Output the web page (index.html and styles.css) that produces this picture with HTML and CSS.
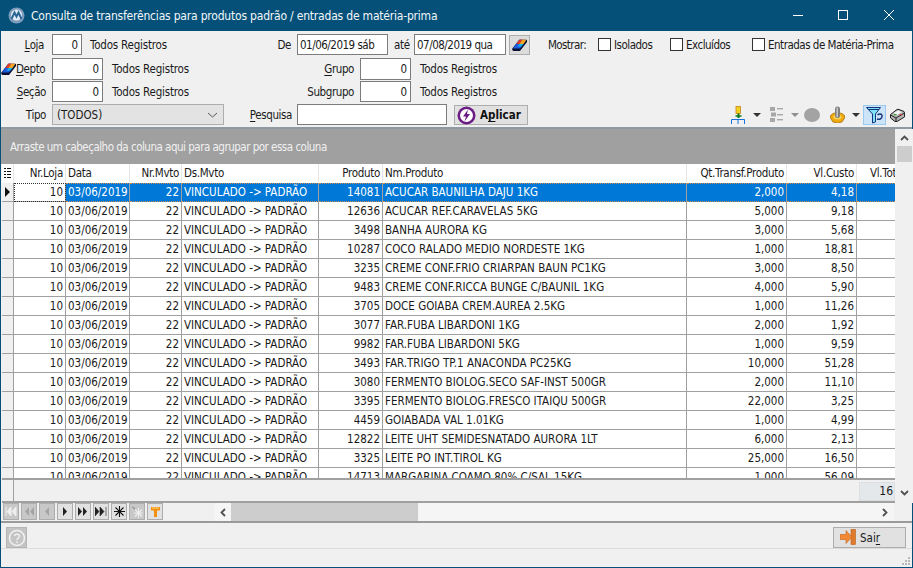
FILE: index.html
```html
<!DOCTYPE html>
<html lang="pt">
<head>
<meta charset="utf-8">
<title>Consulta de transferências</title>
<link rel="stylesheet" href="styles.css">
</head>
<body>
<div class="window">
  <header class="titlebar">
    <svg class="app-icon" width="17" height="17" viewBox="0 0 17 17"><circle cx="8.500" cy="8.500" r="8" fill="#7d9cbc"/><circle cx="8.500" cy="8" r="5.500" fill="#e4edf5"/><path d="M3.500 12 L6.500 5.500 L8.500 9.500 L10.500 5.500 L13.500 12" fill="none" stroke="#2a6695" stroke-width="2"/></svg>
    <span class="title">Consulta de transferências para produtos padrão / entradas de matéria-prima</span>
    <div class="wincontrols">
      <svg width="46" height="31" viewBox="0 0 46 31"><path d="M19 15.500H29" stroke="#fff"/></svg>
      <svg width="46" height="31" viewBox="0 0 46 31"><rect x="18.500" y="10.500" width="9" height="9" fill="none" stroke="#fff"/></svg>
      <svg width="46" height="31" viewBox="0 0 46 31"><path d="M18 10L28 20M28 10L18 20" stroke="#fff"/></svg>
    </div>
  </header>

  <section class="filters">
    <div class="frow r1">
      <label class="lb w-loja"><u>L</u>oja</label>
      <input class="num w30" value="0">
      <span class="all a1">Todos Registros</span>
      <label class="lb w-de">De</label>
      <input class="date" value="01/06/2019 sáb">
      <label class="ate">até</label>
      <input class="date d2" value="07/08/2019 qua">
      <button class="erase"><svg width="15" height="12" viewBox="0 0 15 12"><path d="M0 10L7 1H15V3L8 12H1Z" fill="#0a1030"/><path d="M1 9.500L7.500 .5H14.500L8 9.500Z" fill="#1a5be0"/><path d="M4.500 5L7.500 .5H10.500L7.500 5Z" fill="#e8391c"/><path d="M7.500 5L10.500 .5H14.500L11.500 5Z" fill="#f7a51c"/><path d="M7.500 5H11.500L9.500 7.500H5.500Z" fill="#16b5e8"/></svg></button>
      <span class="mostrar">Mostrar:</span>
      <span class="chk c1"><i></i>Isolados</span>
      <span class="chk c2"><i></i>Excluídos</span>
      <span class="chk c3"><i></i>Entradas de Matéria-Prima</span>
    </div>
    <div class="frow r2">
      <svg class="eraser-small" width="15" height="12" viewBox="0 0 15 12"><path d="M0 10L7 1H15V3L8 12H1Z" fill="#0a1030"/><path d="M1 9.500L7.500 .5H14.500L8 9.500Z" fill="#1a5be0"/><path d="M4.500 5L7.500 .5H10.500L7.500 5Z" fill="#e8391c"/><path d="M7.500 5L10.500 .5H14.500L11.500 5Z" fill="#f7a51c"/><path d="M7.500 5H11.500L9.500 7.500H5.500Z" fill="#16b5e8"/></svg>
      <label class="lb w-depto"><u>D</u>epto</label>
      <input class="num w51" value="0">
      <span class="all a2">Todos Registros</span>
      <label class="lb w-grupo"><u>G</u>rupo</label>
      <input class="num w51" value="0">
      <span class="all a2">Todos Registros</span>
    </div>
    <div class="frow r3">
      <label class="lb w-secao"><u>S</u>eção</label>
      <input class="num w51" value="0">
      <span class="all a2">Todos Registros</span>
      <label class="lb w-grupo">Subgrupo</label>
      <input class="num w51" value="0">
      <span class="all a2">Todos Registros</span>
    </div>
    <div class="frow r4">
      <label class="lb w-secao">Tipo</label>
      <div class="select"><span>(TODOS)</span><svg width="11" height="6" viewBox="0 0 11 6"><path d="M1 1L5.500 5L10 1" fill="none" stroke="#555"/></svg></div>
      <label class="lb w-pesq"><u>P</u>esquisa</label>
      <input class="search">
      <button class="apply">
        <svg width="19" height="19" viewBox="0 0 19 19"><circle cx="9.500" cy="9.500" r="9" fill="#6a1b84"/><circle cx="9.500" cy="9.500" r="6.500" fill="#fff"/><path d="M11 3.500L6 10.500H9L7.500 15.500L13 8H10Z" fill="#6a1b84"/></svg>
        <b>A<u>p</u>licar</b>
      </button>
      <div class="tools">
        <svg class="t1" width="15" height="18" viewBox="0 0 15 18"><rect x="5" y="0.500" width="4.500" height="7" fill="#f2d21c" stroke="#c9831a" stroke-width=".8"/><path d="M7.500 7.500V12" stroke="#0a7a1c" stroke-width="2"/><path d="M4.500 10H10.500" stroke="#0a7a1c" stroke-width="1.500"/><path d="M.5 18V13.500H13.500V18M7 13.500V18" fill="none" stroke="#1a73d8"/></svg>
        <span class="caret dark"></span>
        <svg class="t2" width="13" height="15" viewBox="0 0 13 15"><g fill="#a8a8a8"><rect x="0" y="0" width="5" height="4"/><rect x="1" y="5.500" width="5" height="4"/><rect x="0" y="11" width="5" height="4"/><rect x="7" y="1" width="6" height="1.400"/><rect x="7" y="7" width="6" height="1.400"/><rect x="7" y="12" width="6" height="1.400"/></g></svg>
        <span class="caret light"></span>
        <span class="dot"></span>
        <svg class="t3" width="15" height="17" viewBox="0 0 15 17"><path d="M3 7.500L7.500 6.500L12 7.500L15 10L14 13L12 16L7.500 17L3 16L1 13L0 10Z" fill="#eeaa12" stroke="#a86f06" stroke-width=".8"/><ellipse cx="7.500" cy="11" rx="4" ry="2.500" fill="#f9d35a"/><rect x="5" y="0.500" width="5" height="11.500" rx="2.500" fill="#7f7f7f"/><rect x="6.500" y="1.500" width="1.500" height="9.500" fill="#c8c8c8"/></svg>
        <span class="caret dark"></span>
        <span class="filter-on"><svg width="17" height="18" viewBox="0 0 17 18"><path d="M0.500 1.500H14.500L9.500 8V16L6.500 17V8Z" fill="#7fe1f5" stroke="#14337e"/><path d="M2 3.500H13" stroke="#14337e"/><path d="M11 13C14 14 16.500 12 16 9.500C15.600 7.500 13 7.500 11.500 9" fill="none" stroke="#14337e" stroke-width="1.400"/></svg></span>
        <svg class="t4" width="15" height="14" viewBox="0 0 15 14"><path d="M.5 6.500L7 1.500Q8 1 9 1.500L14 3.500Q14.500 4 14.500 5V9L7 13.500H5L.5 10Z" fill="#b4b4b4" stroke="#222"/><path d="M.5 7L6 10L14.500 5M6 10V13.500" fill="none" stroke="#222"/><path d="M3.500 5L8 2.500L12 4L7 7Z" fill="#f4f4f4"/><rect x="9.500" y="6" width="2.500" height="1.200" fill="#d33"/><rect x="4" y="6" width="2.500" height="1.200" fill="#3a3"/></svg>
      </div>
    </div>
  </section>

  <section class="gridwrap">
    <div class="gridmain">
      <div class="groupbar">Arraste um cabeçalho da coluna aqui para agrupar por essa coluna</div>
      <div class="grid" id="grid">
        <div class="row head">
          <div class="c ind"><svg width="7" height="11" viewBox="0 0 7 11"><path d="M0 .5H2M3 .5H7M0 3.500H2M3 3.500H7M0 6.500H2M3 6.500H7M0 9.500H2M3 9.500H7" stroke="#111"/></svg></div>
          <div class="c r">Nr.Loja</div><div class="c">Data</div><div class="c r">Nr.Mvto</div><div class="c">Ds.Mvto</div><div class="c r">Produto</div><div class="c">Nm.Produto</div><div class="c r">Qt.Transf.Produto</div><div class="c r">Vl.Custo</div><div class="c r clip">Vl.Total</div>
        </div>
        <div class="row sel"><div class="c ind"><span class="arrow"></span></div><div class="c r focus">10</div><div class="c">03/06/2019</div><div class="c r">22</div><div class="c">VINCULADO -&gt; PADRÃO</div><div class="c r">14081</div><div class="c">ACUCAR BAUNILHA DAJU 1KG</div><div class="c r">2,000</div><div class="c r">4,18</div><div class="c"></div></div>
        <div class="row"><div class="c ind"></div><div class="c r">10</div><div class="c">03/06/2019</div><div class="c r">22</div><div class="c">VINCULADO -&gt; PADRÃO</div><div class="c r">12636</div><div class="c">ACUCAR REF.CARAVELAS 5KG</div><div class="c r">5,000</div><div class="c r">9,18</div><div class="c"></div></div>
        <div class="row"><div class="c ind"></div><div class="c r">10</div><div class="c">03/06/2019</div><div class="c r">22</div><div class="c">VINCULADO -&gt; PADRÃO</div><div class="c r">3498</div><div class="c">BANHA AURORA KG</div><div class="c r">3,000</div><div class="c r">5,68</div><div class="c"></div></div>
        <div class="row"><div class="c ind"></div><div class="c r">10</div><div class="c">03/06/2019</div><div class="c r">22</div><div class="c">VINCULADO -&gt; PADRÃO</div><div class="c r">10287</div><div class="c">COCO RALADO MEDIO NORDESTE 1KG</div><div class="c r">1,000</div><div class="c r">18,81</div><div class="c"></div></div>
        <div class="row"><div class="c ind"></div><div class="c r">10</div><div class="c">03/06/2019</div><div class="c r">22</div><div class="c">VINCULADO -&gt; PADRÃO</div><div class="c r">3235</div><div class="c">CREME CONF.FRIO CRIARPAN BAUN PC1KG</div><div class="c r">3,000</div><div class="c r">8,50</div><div class="c"></div></div>
        <div class="row"><div class="c ind"></div><div class="c r">10</div><div class="c">03/06/2019</div><div class="c r">22</div><div class="c">VINCULADO -&gt; PADRÃO</div><div class="c r">9483</div><div class="c">CREME CONF.RICCA BUNGE C/BAUNIL 1KG</div><div class="c r">4,000</div><div class="c r">5,90</div><div class="c"></div></div>
        <div class="row"><div class="c ind"></div><div class="c r">10</div><div class="c">03/06/2019</div><div class="c r">22</div><div class="c">VINCULADO -&gt; PADRÃO</div><div class="c r">3705</div><div class="c">DOCE GOIABA CREM.AUREA 2.5KG</div><div class="c r">1,000</div><div class="c r">11,26</div><div class="c"></div></div>
        <div class="row"><div class="c ind"></div><div class="c r">10</div><div class="c">03/06/2019</div><div class="c r">22</div><div class="c">VINCULADO -&gt; PADRÃO</div><div class="c r">3077</div><div class="c">FAR.FUBA LIBARDONI 1KG</div><div class="c r">2,000</div><div class="c r">1,92</div><div class="c"></div></div>
        <div class="row"><div class="c ind"></div><div class="c r">10</div><div class="c">03/06/2019</div><div class="c r">22</div><div class="c">VINCULADO -&gt; PADRÃO</div><div class="c r">9982</div><div class="c">FAR.FUBA LIBARDONI 5KG</div><div class="c r">1,000</div><div class="c r">9,59</div><div class="c"></div></div>
        <div class="row"><div class="c ind"></div><div class="c r">10</div><div class="c">03/06/2019</div><div class="c r">22</div><div class="c">VINCULADO -&gt; PADRÃO</div><div class="c r">3493</div><div class="c">FAR.TRIGO TP.1 ANACONDA PC25KG</div><div class="c r">10,000</div><div class="c r">51,28</div><div class="c"></div></div>
        <div class="row"><div class="c ind"></div><div class="c r">10</div><div class="c">03/06/2019</div><div class="c r">22</div><div class="c">VINCULADO -&gt; PADRÃO</div><div class="c r">3080</div><div class="c">FERMENTO BIOLOG.SECO SAF-INST 500GR</div><div class="c r">2,000</div><div class="c r">11,10</div><div class="c"></div></div>
        <div class="row"><div class="c ind"></div><div class="c r">10</div><div class="c">03/06/2019</div><div class="c r">22</div><div class="c">VINCULADO -&gt; PADRÃO</div><div class="c r">3395</div><div class="c">FERMENTO BIOLOG.FRESCO ITAIQU 500GR</div><div class="c r">22,000</div><div class="c r">3,25</div><div class="c"></div></div>
        <div class="row"><div class="c ind"></div><div class="c r">10</div><div class="c">03/06/2019</div><div class="c r">22</div><div class="c">VINCULADO -&gt; PADRÃO</div><div class="c r">4459</div><div class="c">GOIABADA VAL 1.01KG</div><div class="c r">1,000</div><div class="c r">4,99</div><div class="c"></div></div>
        <div class="row"><div class="c ind"></div><div class="c r">10</div><div class="c">03/06/2019</div><div class="c r">22</div><div class="c">VINCULADO -&gt; PADRÃO</div><div class="c r">12822</div><div class="c">LEITE UHT SEMIDESNATADO AURORA 1LT</div><div class="c r">6,000</div><div class="c r">2,13</div><div class="c"></div></div>
        <div class="row"><div class="c ind"></div><div class="c r">10</div><div class="c">03/06/2019</div><div class="c r">22</div><div class="c">VINCULADO -&gt; PADRÃO</div><div class="c r">3325</div><div class="c">LEITE PO INT.TIROL KG</div><div class="c r">25,000</div><div class="c r">16,50</div><div class="c"></div></div>
        <div class="row"><div class="c ind"></div><div class="c r">10</div><div class="c">03/06/2019</div><div class="c r">22</div><div class="c">VINCULADO -&gt; PADRÃO</div><div class="c r">14713</div><div class="c">MARGARINA COAMO 80% C/SAL 15KG</div><div class="c r">1,000</div><div class="c r">56,09</div><div class="c"></div></div>
      </div>
      <div class="footer"><span class="foot-ind"></span><span class="count">16</span></div>
    </div>
    <div class="vscroll">
      <svg width="9" height="6" viewBox="0 0 9 6"><path d="M1 5L4.500 1.500L8 5" fill="none" stroke="#505050" stroke-width="1.800"/></svg>
      <span class="thumb"></span>
      <svg class="down" width="9" height="6" viewBox="0 0 9 6"><path d="M1 1L4.500 4.500L8 1" fill="none" stroke="#505050" stroke-width="1.800"/></svg>
    </div>
  </section>

  <section class="navbar">
    <div class="navbtns">
      <span class="nb off"><svg width="12" height="9" viewBox="0 0 12 9"><path d="M1 0V9M6 0V9L2 4.500ZM11 0V9L7 4.500Z" fill="#eee" stroke="#eee"/></svg></span>
      <span class="nb off"><svg width="10" height="9" viewBox="0 0 10 9"><path d="M5 0V9L1 4.500ZM10 0V9L6 4.500Z" fill="#a4a4a4"/></svg></span>
      <span class="nb off"><svg width="6" height="9" viewBox="0 0 6 9"><path d="M5 0V9L1 4.500Z" fill="#a4a4a4"/></svg></span>
      <span class="nb"><svg width="6" height="9" viewBox="0 0 6 9"><path d="M1 0V9L5 4.500Z" fill="#222"/></svg></span>
      <span class="nb"><svg width="10" height="9" viewBox="0 0 10 9"><path d="M0 0V9L4 4.500ZM5 0V9L9 4.500Z" fill="#222"/></svg></span>
      <span class="nb"><svg width="12" height="9" viewBox="0 0 12 9"><path d="M0 0V9L4 4.500ZM5 0V9L9 4.500ZM11 0V9" fill="#222" stroke="#222" stroke-width=".6"/></svg></span>
      <span class="nb"><svg width="11" height="11" viewBox="0 0 11 11"><path d="M5.500 0V11M0 5.500H11M1.500 1.500L9.500 9.500M9.500 1.500L1.500 9.500" stroke="#111" stroke-width="1.100"/></svg></span>
      <span class="nb off"><svg width="13" height="12" viewBox="0 0 13 12"><path d="M7.500 2V12M3 7H12M4 3.500L11 10.500M11 3.500L4 10.500" stroke="#eee" stroke-width="1.100"/><path d="M0 0L4 2V4Z" fill="#888"/></svg></span>
      <span class="nb"><svg width="9" height="10" viewBox="0 0 9 10"><path d="M0 0H9V3.500H6V10H3V3.500H0Z" fill="#f29111"/><path d="M1 1H8" stroke="#fbd27a"/></svg></span>
    </div>
    <div class="hscroll">
      <svg class="ha" width="6" height="9" viewBox="0 0 6 9"><path d="M5 1L1.500 4.500L5 8" fill="none" stroke="#505050" stroke-width="1.800"/></svg>
      <span class="hthumb"></span>
      <svg class="hb" width="6" height="9" viewBox="0 0 6 9"><path d="M1 1L4.500 4.500L1 8" fill="none" stroke="#505050" stroke-width="1.800"/></svg>
    </div>
  </section>

  <section class="actions">
    <span class="help"><svg width="18" height="18" viewBox="0 0 18 18"><circle cx="9" cy="9" r="7.500" fill="none" stroke="#f2f2f2" stroke-width="1.500"/><path d="M6.500 7C6.500 4.500 11.500 4.500 11.500 7C11.500 9 9 9 9 11" fill="none" stroke="#f2f2f2" stroke-width="1.500"/><rect x="8.200" y="12.300" width="1.600" height="1.600" fill="#f2f2f2"/></svg></span>
    <button class="exit">
      <svg width="16" height="17" viewBox="0 0 16 17"><rect x="11" y="0.500" width="4.500" height="15" fill="#e07a2c" stroke="#b95f1c" stroke-width=".6"/><path d="M0 5.500H6V1.500L12 8L6 14.500V10.500H0Z" fill="#f28a35" stroke="#c4651c" stroke-width=".6"/></svg>
      <span>Sai<u>r</u></span>
    </button>
  </section>
  <div class="statusbar"><svg width="10" height="10" viewBox="0 0 10 10"><path d="M7 1h2v2h-2zM4 4h2v2h-2zM7 4h2v2h-2zM1 7h2v2h-2zM4 7h2v2h-2zM7 7h2v2h-2z" fill="#b9b9b9"/></svg></div>
</div>
</body>
</html>
```
FILE: styles.css
```css
* { box-sizing: border-box; }
html, body { margin: 0; padding: 0; }
body { width: 913px; height: 568px; overflow: hidden; font-family: "DejaVu Sans Condensed", "DejaVu Sans", sans-serif; font-stretch: condensed; font-size: 11.5px; color: #1a1a1a; }
u { text-decoration-thickness: 1px; text-underline-offset: 2px; }
.window { width: 913px; height: 568px; display: flex; flex-direction: column; background: #f0f0f0; border: 1px solid #045078; border-top: 0; }
.titlebar { height: 31px; flex: none; background: #045078; display: flex; align-items: center; color: #fff; padding-left: 8px; margin: 0 -1px; }
.app-icon { flex: none; }
.title { margin-left: 6px; font-size: 12px; letter-spacing: -.2px; color: #f2f6fa; }
.wincontrols { margin-left: auto; margin-right: 1px; display: flex; }
.filters { height: 98px; flex: none; display: flex; flex-direction: column; padding-top: 3px; border-bottom: 2px solid #8f9aa2; }
.frow { display: flex; align-items: center; flex: none; }
.r1 { height: 21px; }
.r2 { height: 22px; margin-top: 3px; }
.r3 { height: 21px; margin-top: 1px; }
.r4 { height: 21px; margin-top: 2px; }
input, .select { border: 1px solid #7c7c7c; background: #fff; height: 21px; font: inherit; font-stretch: condensed; color: inherit; padding: 0 3px; outline: none; flex: none; }
.r2 input { height: 22px; }
.num { text-align: right; }
.w30 { width: 30px; margin-left: 8px; }
.w51 { width: 51px; margin-left: 6px; }
.lb { text-align: right; flex: none; white-space: nowrap; letter-spacing: -.4px; }
.w-loja { width: 43px; }
.w-depto { width: 29px; margin-right: 1px; }
.w-secao { width: 45px; }
.w-de { width: 124px; }
.w-grupo { width: 165px; }
.w-pesq { width: 68px; }
.all { flex: none; width: 77px; white-space: nowrap; letter-spacing: -.2px; }
.a1 { margin-left: 8px; }
.a2 { margin-left: 9px; }
.date { width: 91px; margin-left: 6px; padding: 0 2px; letter-spacing: -.5px; }
.d2 { width: 92px; }
.ate { margin-left: 6px; width: 14px; flex: none; letter-spacing: -.3px; white-space: nowrap; }
.erase { width: 21px; height: 20px; margin: 1px 0 0 3px; padding: 0; background: #dcdcdc; border: 1px solid #adadad; display: flex; align-items: center; justify-content: center; flex: none; }
.mostrar { margin-left: 18px; width: 37px; flex: none; white-space: nowrap; letter-spacing: -.6px; }
.chk { display: inline-flex; align-items: center; white-space: nowrap; flex: none; letter-spacing: -.5px; }
.chk i { width: 13px; height: 13px; background: #fff; border: 1px solid #333; margin-right: 3px; flex: none; }
.c1 { margin-left: 13px; width: 55px; }
.c2 { margin-left: 17px; width: 63px; }
.c3 { margin-left: 19px; }
.eraser-small { flex: none; }
.select { width: 172px; margin-left: 6px; background: #e3e3e3; border-color: #adadad; display: flex; align-items: center; justify-content: space-between; padding: 0 5px 0 4px; }
.search { width: 150px; margin-left: 5px; }
.apply { width: 74px; height: 20px; margin: 1px 0 0 7px; padding: 0 0 0 2px; display: flex; align-items: center; gap: 4px; background: #e1e1e1; border: 1px solid #adadad; font: inherit; font-stretch: condensed; color: #111; flex: none; }
.tools { margin-left: auto; display: flex; align-items: center; margin-right: 7px; }
.caret { width: 0; height: 0; border-left: 4px solid transparent; border-right: 4px solid transparent; flex: none; }
.caret.dark { border-top: 4px solid #333; margin-left: 7px; }
.caret.light { border-top: 4px solid #8f8f8f; margin-left: 8px; }
.t2 { margin-left: 9px; flex: none; }
.dot { width: 16px; height: 14px; margin-left: 5px; border-radius: 50%; background: #a3a3a3; flex: none; }
.t3 { margin-left: 10px; flex: none; }
.filter-on { width: 23px; height: 20px; margin-left: 3px; background: #cce4f7; border: 1px solid #99c9ef; display: flex; align-items: center; justify-content: center; flex: none; }
.t4 { margin-left: 4px; flex: none; }
.gridwrap { height: 374px; flex: none; display: flex; padding-left: 1px; }
.gridmain { width: 893px; flex: none; display: flex; flex-direction: column; }
.groupbar { height: 35px; flex: none; background: #a0a0a0; color: #f0f0f0; display: flex; align-items: center; padding-left: 9px; margin-left: -1px; white-space: nowrap; letter-spacing: -.5px; }
.grid { height: 316px; flex: none; overflow: hidden; background: #fff; border-bottom: 2px solid #a0a0a0; }
.row { display: grid; grid-template-columns: 12px 52px 64px 52px 137px 64px 304px 100px 70px 38px; height: 19px; }
.c { padding: 0 2px; border-right: 1px solid #a0a0a0; border-bottom: 1px solid #a0a0a0; line-height: 18px; white-space: nowrap; overflow: hidden; background: #fff; }
.r { text-align: right; }
.head .c { border-color: #e6e6e6; border-bottom-color: #fff; background: #fff; letter-spacing: -.3px; }
.head .clip { text-align: left; padding-left: 13px; border-right: 0; }
.c:last-child { border-right: 0; }
.ind { background: #f0f0f0; display: flex; align-items: center; justify-content: center; padding: 0; }
.head .ind { background: #fff; }
.arrow { width: 0; height: 0; border-left: 5px solid #111; border-top: 5px solid transparent; border-bottom: 5px solid transparent; }
.sel .c:not(.ind):not(.focus) { background: #0078d7; color: #fff; border-top: 1px dotted #d08a4a; border-bottom: 1px dotted #d08a4a; line-height: 16px; }
.focus { outline: 1px dotted #333; outline-offset: -1px; }
.footer { height: 23px; flex: none; display: flex; background: #f0f0f0; border-bottom: 2px solid #a0a0a0; }
.foot-ind { width: 12px; border-right: 1px solid #a0a0a0; }
.count { width: 36px; height: 19px; margin: 2px 0 0 auto; background: #e4e8ea; border: 1px solid #dadfe2; text-align: right; padding-right: 1px; line-height: 17px; font-size: 12px; }
.vscroll { width: 18px; flex: none; display: flex; flex-direction: column; align-items: center; padding-top: 6px; background: #f0f0f0; }
.thumb { width: 15px; height: 16px; background: #cdcdcd; margin-top: 5px; }
.down { margin-top: auto; margin-bottom: 7px; }
.navbar { height: 20px; flex: none; display: flex; border-bottom: 2px solid #9a9a9a; }
.navbtns { width: 213px; flex: none; display: flex; padding-left: 2px; gap: 2px; }
.nb { width: 16px; height: 17px; background: #e1e1e1; border: 1px solid #adadad; display: flex; align-items: center; justify-content: center; flex: none; }
.nb.off { background: #c8c8c8; }
.hscroll { width: 680px; height: 18px; display: flex; align-items: center; background: #f5f5f5; }
.ha { margin-left: 6px; flex: none; }
.hthumb { width: 187px; height: 18px; margin-left: 5px; background: #cdcdcd; flex: none; }
.hb { margin-left: auto; margin-right: 6px; flex: none; }
.actions { height: 26px; flex: none; display: flex; align-items: flex-start; justify-content: space-between; padding: 4px 6px 0 5px; border-bottom: 1px solid #dcdcdc; }
.help { width: 21px; height: 21px; background: #c4c4c4; border: 1px solid #b5b5b5; display: flex; align-items: center; justify-content: center; }
.exit { width: 73px; height: 21px; padding: 0 0 0 6px; display: flex; align-items: center; gap: 4px; background: #e1e1e1; border: 1px solid #adadad; font: inherit; font-stretch: condensed; color: inherit; }
.statusbar { flex: 1; display: flex; justify-content: flex-end; align-items: flex-end; padding: 0 1px 1px 0; }
```
